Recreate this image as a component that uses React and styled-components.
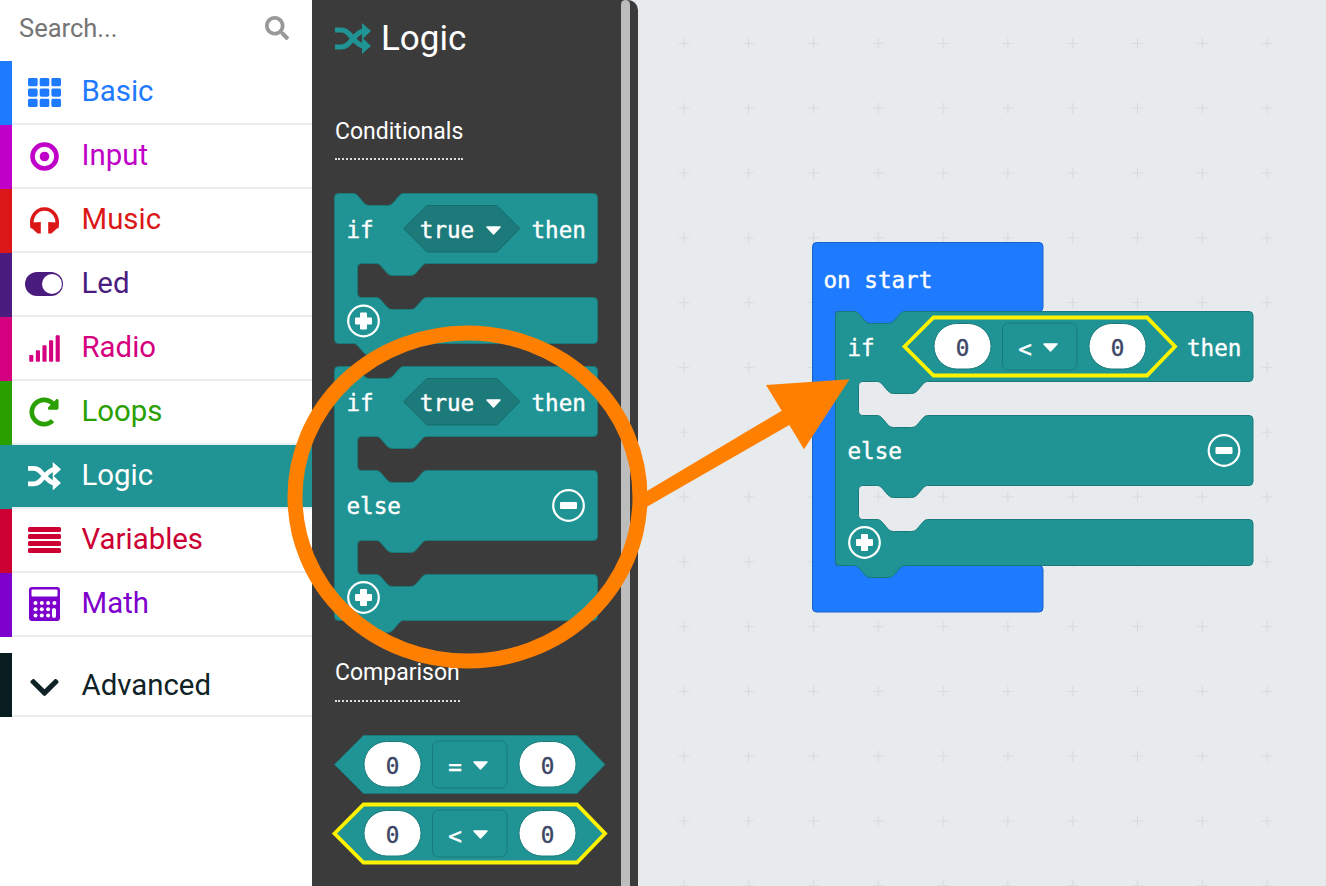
import React from "react";
import styled, { createGlobalStyle } from "styled-components";
import { FaTh, FaSignal, FaRedoAlt, FaChevronDown, FaSearch } from "react-icons/fa";

const TEAL = "#209494";
const TEAL_DARK = "#1a7a7a";
const YELLOW = "#fff200";
const ORANGE = "#ff8000";

const GlobalStyle = createGlobalStyle`
  html, body {
    margin: 0;
    padding: 0;
    height: 100%;
    overflow: hidden;
    background: #e7ebee;
    font-family: Roboto, "Liberation Sans", sans-serif;
  }
`;

const Page = styled.div`
  position: relative;
  display: flex;
  width: 100vw;
  height: 100vh;
  overflow: hidden;
`;

const Sidebar = styled.nav`
  flex: 0 0 312px;
  min-width: 0;
  background: #fff;
`;

const SearchRow = styled.div`
  height: 61px;
  display: flex;
  align-items: center;
  padding: 0 23px 6px 19px;
  box-sizing: border-box;
  color: #999;
  font-size: 24px;
`;

const SearchInput = styled.input`
  flex: 1;
  width: 0;
  border: none;
  outline: none;
  padding: 0;
  background: transparent;
  font: 400 25.5px Roboto, sans-serif;
  &::placeholder {
    color: #757575;
    opacity: 1;
  }
`;

const Row = styled.div`
  display: flex;
  height: 64px;
  color: ${(p) => (p.$active ? "#fff" : p.$color)};
  margin-top: ${(p) => p.$top || 0}px;
`;

const RowBar = styled.div`
  flex: 0 0 12px;
  background: ${(p) => p.$color};
`;

const RowBody = styled.div`
  flex: 1;
  display: flex;
  align-items: center;
  box-sizing: border-box;
  height: 64px;
  background: ${(p) => (p.$active ? p.$color : "transparent")};
  border-bottom: 2px solid #e9edf0;
`;

const RowIcon = styled.span`
  flex: 0 0 64px;
  display: flex;
  align-items: center;
  justify-content: center;
  font-size: ${(p) => p.$size || 34}px;
  margin-right: 5.5px;
  margin-top: ${(p) => (p.$low ? 6 : 0)}px;
`;

const RowLabel = styled.span`
  font-size: 29.4px;
  line-height: 34px;
  margin-top: ${(p) => (p.$low ? 1 : -2)}px;
`;

const Flyout = styled.section`
  flex: 0 0 326px;
  display: flex;
  background: #3b3b3b;
  border-top-right-radius: 10px;
  overflow: hidden;
`;

const FlyoutContent = styled.div`
  flex: 1;
  padding-left: 22px;
  color: #fff;
`;

const Scrollbar = styled.div`
  flex: 0 0 9px;
  margin-right: 8px;
  background: #bdbdbd;
  border-radius: 5px 5px 0 0;
`;

const FlyoutTitle = styled.h2`
  display: flex;
  align-items: center;
  gap: 10px;
  height: 76px;
  margin: 0;
  padding-left: 1px;
  font-size: 35px;
  font-weight: 400;
`;

const TitleIcon = styled.span`
  display: flex;
  color: ${TEAL};
`;

const SectionLabel = styled.div`
  display: table;
  box-sizing: border-box;
  height: ${(p) => p.$height}px;
  margin-top: ${(p) => p.$top}px;
  margin-left: 1px;
  padding-top: 1px;
  font-size: 23px;
  font-weight: 400;
  line-height: 28px;
  border-bottom: 2px dotted #ddd;
`;

const BlockSvg = styled.svg`
  display: block;
  overflow: visible;
  margin-top: ${(p) => p.$top || 0}px;
`;

const Workspace = styled.main`
  position: relative;
  flex: 1;
`;

const GridSvg = styled.svg`
  position: absolute;
  inset: 0;
  width: 100%;
  height: 100%;
`;

// blocks sit at free positions on the workspace canvas
const CanvasBlock = styled(BlockSvg)`
  position: absolute;
  left: ${(p) => p.$x}px;
  top: ${(p) => p.$y}px;
  margin: 0;
`;

const Overlay = styled.svg`
  position: absolute;
  left: 0;
  top: 0;
  width: 100%;
  height: 100%;
  pointer-events: none;
`;

const BlockText = styled.text`
  font-family: "DejaVu Sans Mono", "Liberation Mono", monospace;
  font-size: 22.6px;
  fill: ${(p) => p.$fill || "#fff"};
  stroke: ${(p) => p.$fill || "#fff"};
  stroke-width: 0.4px;
`;

function MathIcon() {
  const dots = [];
  for (let row = 0; row < 3; row++) {
    for (let col = 0; col < 4; col++) {
      if (col === 3 && row > 0) continue;
      dots.push(<circle key={`${row}-${col}`} cx={6.5 + col * 6.3} cy={16 + row * 6.2} r="2" fill="#fff" />);
    }
  }
  return (
    <svg width="31" height="34" viewBox="0 0 31 34">
      <rect width="31" height="34" rx="3" fill="currentColor" />
      <rect x="2.5" y="2.5" width="26" height="7" rx="1" fill="#fff" />
      {dots}
      <rect x="23" y="21" width="4" height="10" rx="2" fill="#fff" />
    </svg>
  );
}

function HeadphonesIcon() {
  return (
    <svg width="31" height="27" viewBox="0 0 31 27">
      <path d="M3.5 21 C0.5 9 8 2 15.5 2 C23 2 30.5 9 27.5 21" fill="none" stroke="currentColor" strokeWidth="3.6" />
      <path d="M11.8 15 L11.8 26.5 L8.6 26.5 L1.5 20 L3.5 15.5 Z M19.2 15 L19.2 26.5 L22.4 26.5 L29.5 20 L27.5 15.5 Z" fill="currentColor" />
    </svg>
  );
}

function BarsIcon() {
  return (
    <svg width="33" height="26" viewBox="0 0 33 26" fill="currentColor">
      <rect y="0" width="33" height="5" rx="1.5" />
      <rect y="7" width="33" height="5" rx="1.5" />
      <rect y="14" width="33" height="5" rx="1.5" />
      <rect y="21" width="33" height="5" rx="1.5" />
    </svg>
  );
}

function TargetIcon() {
  return (
    <svg width="29" height="29" viewBox="0 0 29 29">
      <circle cx="14.5" cy="14.5" r="12" fill="none" stroke="currentColor" strokeWidth="4.6" />
      <circle cx="14.5" cy="14.5" r="4.8" fill="currentColor" />
    </svg>
  );
}

function ToggleIcon() {
  return (
    <svg width="38" height="24" viewBox="0 0 38 24">
      <rect width="38" height="24" rx="12" fill="currentColor" />
      <circle cx="27" cy="12" r="10" fill="#fff" />
    </svg>
  );
}

function ShuffleIcon({ width = 33 }) {
  return (
    <svg width={width} height={(width * 31) / 36} viewBox="0 0 36 31">
      <path
        d="M0 7 H6 C12 7 14 11 18 15.5 C22 20 25 23 29 23 M0 24 H6 C12 24 14 20 18 15.5 C22 11 25 8 29 8"
        fill="none"
        stroke="currentColor"
        strokeWidth="5.2"
      />
      <path d="M27 0 L36 8 L27 16.5 Z M27 14.5 L36 23 L27 31 Z" fill="currentColor" />
    </svg>
  );
}

const categories = [
  { name: "Basic", color: "#1e7aff", icon: <FaTh />, size: 33 },
  { name: "Input", color: "#c000c8", icon: <TargetIcon /> },
  { name: "Music", color: "#dc1717", icon: <HeadphonesIcon /> },
  { name: "Led", color: "#4b1c80", icon: <ToggleIcon /> },
  { name: "Radio", color: "#d4007f", icon: <FaSignal />, size: 33 },
  { name: "Loops", color: "#2a9f00", icon: <FaRedoAlt />, size: 30 },
  { name: "Logic", color: TEAL, icon: <ShuffleIcon />, active: true },
  { name: "Variables", color: "#cc0033", icon: <BarsIcon /> },
  { name: "Math", color: "#7d00cc", icon: <MathIcon /> },
];

// the notch of a statement block, walked left to right or right to left
const notchRight = (x, y) =>
  `L${x + 19} ${y} Q${x + 21} ${y} ${x + 23} ${y + 2} L${x + 30} ${y + 10} Q${x + 32} ${y + 12} ${x + 35} ${y + 12} ` +
  `L${x + 53} ${y + 12} Q${x + 56} ${y + 12} ${x + 58} ${y + 10} L${x + 65} ${y + 2} Q${x + 67} ${y} ${x + 69} ${y} `;

const notchLeft = (x, y) =>
  `L${x + 69} ${y} Q${x + 67} ${y} ${x + 65} ${y + 2} L${x + 58} ${y + 10} Q${x + 56} ${y + 12} ${x + 53} ${y + 12} ` +
  `L${x + 35} ${y + 12} Q${x + 32} ${y + 12} ${x + 30} ${y + 10} L${x + 23} ${y + 2} Q${x + 21} ${y} ${x + 19} ${y} `;

const rightSide = (w, top, bottom) =>
  `L${w - 4} ${top} Q${w} ${top} ${w} ${top + 4} L${w} ${bottom - 4} Q${w} ${bottom} ${w - 4} ${bottom} `;

const slot = (top, bottom) =>
  `L27 ${top} Q23 ${top} 23 ${top + 4} L23 ${bottom - 4} Q23 ${bottom} 27 ${bottom} `;

function ifPath(w, hasElse) {
  let d = `M0 4 Q0 0 4 0 ${notchRight(0, 0)}${rightSide(w, 0, 70)}${notchLeft(23, 70)}${slot(70, 104)}${notchRight(23, 104)}`;
  let bottom = 150;
  if (hasElse) {
    d += `${rightSide(w, 104, 174)}${notchLeft(23, 174)}${slot(174, 208)}${notchRight(23, 208)}`;
    d += `${rightSide(w, 208, 254)}`;
    bottom = 254;
  } else {
    d += `${rightSide(w, 104, 150)}`;
  }
  return `${d}${notchLeft(0, bottom)}L4 ${bottom} Q0 ${bottom} 0 ${bottom - 4} Z`;
}

const Caret = ({ x, y }) => (
  <path
    d={`M${x - 6.5} ${y} L${x + 6.5} ${y} L${x} ${y + 7} Z`}
    fill="#fff"
    stroke="#fff"
    strokeWidth="1.5"
    strokeLinejoin="round"
  />
);

const RoundButton = ({ x, y, minus }) => (
  <g>
    <circle cx={x} cy={y} r="15.3" fill="none" stroke="#fff" strokeWidth="2.2" />
    <rect x={x - 8.5} y={y - 3.5} width="17" height="7" rx="1" fill="#fff" />
    {!minus && <rect x={x - 3.5} y={y - 8.5} width="7" height="17" rx="1" fill="#fff" />}
  </g>
);

const TrueHex = () => (
  <g>
    <path d="M69 35 L92.5 12 L162.5 12 L185.5 35 L162.5 58.5 L92.5 58.5 Z" fill="#1c7a7a" stroke="#196c6c" />
    <BlockText x="85.3" y="44.5">true</BlockText>
    <Caret x={159} y={33.5} />
  </g>
);

const Comparison = ({ op, highlight, x = 0, y = 0 }) => (
  <g transform={`translate(${x} ${y})`}>
    <path
      d="M0 29 L29 0 L242.5 0 L270.5 29 L242.5 58 L29 58 Z"
      fill={TEAL}
      stroke={highlight ? YELLOW : TEAL_DARK}
      strokeWidth={highlight ? 3.8 : 1}
      strokeLinejoin="miter"
    />
    <rect x="29.5" y="6" width="57" height="45.5" rx="22.7" fill="#fff" stroke={TEAL_DARK} />
    <BlockText x="58" y="38.5" $fill="#3d4566" textAnchor="middle">0</BlockText>
    <rect x="98" y="5.5" width="74.5" height="47" rx="6" fill={TEAL} stroke={TEAL_DARK} />
    <BlockText x="120.5" y="39.5" textAnchor="middle">{op}</BlockText>
    <Caret x={146} y={26.5} />
    <rect x="184.5" y="6" width="57" height="45.5" rx="22.7" fill="#fff" stroke={TEAL_DARK} />
    <BlockText x="213" y="38.5" $fill="#3d4566" textAnchor="middle">0</BlockText>
  </g>
);

const IfBlock = ({ width, hasElse, thenX, children }) => (
  <g>
    <path d={ifPath(width, hasElse)} fill={TEAL} stroke={TEAL_DARK} strokeLinejoin="round" />
    <BlockText x="12" y="44.5">if</BlockText>
    {children}
    <BlockText x={thenX} y="44.5">then</BlockText>
    {hasElse && <BlockText x="12" y="147">else</BlockText>}
    {hasElse && <RoundButton x={width - 29} y={139} minus />}
    <RoundButton x={29} y={hasElse ? 231 : 127.5} />
  </g>
);

const blueOutline =
  `M0 4 Q0 0 4 0 L226.5 0 Q230.5 0 230.5 4 L230.5 65 Q230.5 69 226.5 69 ${notchLeft(23, 69)}L23 69 L23 323 L226.5 323 ` +
  "Q230.5 323 230.5 327 L230.5 365.5 Q230.5 369.5 226.5 369.5 L4 369.5 Q0 369.5 0 365.5 Z";

function GridPattern() {
  return (
    <GridSvg>
      <defs>
        <pattern id="dots" x="13.5" y="11" width="64.8" height="64.8" patternUnits="userSpaceOnUse">
          <path d="M27 32.4 H37.8 M32.4 27 V37.8" stroke="#d7dbde" strokeWidth="1.2" />
        </pattern>
      </defs>
      <rect width="100%" height="100%" fill="url(#dots)" />
    </GridSvg>
  );
}

export default function App() {
  return (
    <Page>
      <GlobalStyle />
      <Sidebar>
        <SearchRow>
          <SearchInput placeholder="Search..." />
          <FaSearch />
        </SearchRow>
        {categories.map((c) => (
          <Row key={c.name} $color={c.color} $active={c.active}>
            <RowBar $color={c.color} />
            <RowBody $color={c.color} $active={c.active}>
              <RowIcon $size={c.size}>{c.icon}</RowIcon>
              <RowLabel>{c.name}</RowLabel>
            </RowBody>
          </Row>
        ))}
        <Row $color="#0f2226" $top={16}>
          <RowBar $color="#071d20" />
          <RowBody>
            <RowIcon $size={33} $low><FaChevronDown /></RowIcon>
            <RowLabel $low>Advanced</RowLabel>
          </RowBody>
        </Row>
      </Sidebar>

      <Flyout>
        <FlyoutContent>
          <FlyoutTitle>
            <TitleIcon><ShuffleIcon width={36} /></TitleIcon>
            Logic
          </FlyoutTitle>
          <SectionLabel $top={41} $height={43}>Conditionals</SectionLabel>
          <BlockSvg $top={33} width="265" height="163" viewBox="-0.5 -0.5 265 163">
            <IfBlock width={263} thenX={197}><TrueHex /></IfBlock>
          </BlockSvg>
          <BlockSvg $top={10} width="265" height="267" viewBox="-0.5 -0.5 265 267">
            <IfBlock width={263} thenX={197} hasElse><TrueHex /></IfBlock>
          </BlockSvg>
          <SectionLabel $top={25} $height={44}>Comparison</SectionLabel>
          <BlockSvg $top={33} width="272" height="59" viewBox="-0.5 -0.5 272 59">
            <Comparison op="=" />
          </BlockSvg>
          <BlockSvg $top={10} width="272" height="59" viewBox="-0.5 -0.5 272 59">
            <Comparison op="<" highlight />
          </BlockSvg>
        </FlyoutContent>
        <Scrollbar />
      </Flyout>

      <Workspace>
        <GridPattern />
        <CanvasBlock $x={174} $y={242} width="232" height="371" viewBox="-0.5 -0.5 232 371">
          <path d={blueOutline} fill="#1e7aff" stroke="#1a62c8" />
          <BlockText x="11" y="45">on start</BlockText>
        </CanvasBlock>
        <CanvasBlock $x={197} $y={311} width="420" height="268" viewBox="-0.5 -0.5 420 268">
          <IfBlock width={417.5} thenX={351.5} hasElse>
            <Comparison op="<" highlight x={69} y={6} />
          </IfBlock>
        </CanvasBlock>
      </Workspace>

      <Overlay viewBox="0 0 1326 886">
        <ellipse cx="467.5" cy="497" rx="172.5" ry="164" fill="none" stroke={ORANGE} strokeWidth="15" />
        <path d="M766 385 L849.5 379.3 L804 449.3 L789.3 425 L647 506.7 L647 491 L781.7 410.7 Z" fill={ORANGE} />
      </Overlay>
    </Page>
  );
}
